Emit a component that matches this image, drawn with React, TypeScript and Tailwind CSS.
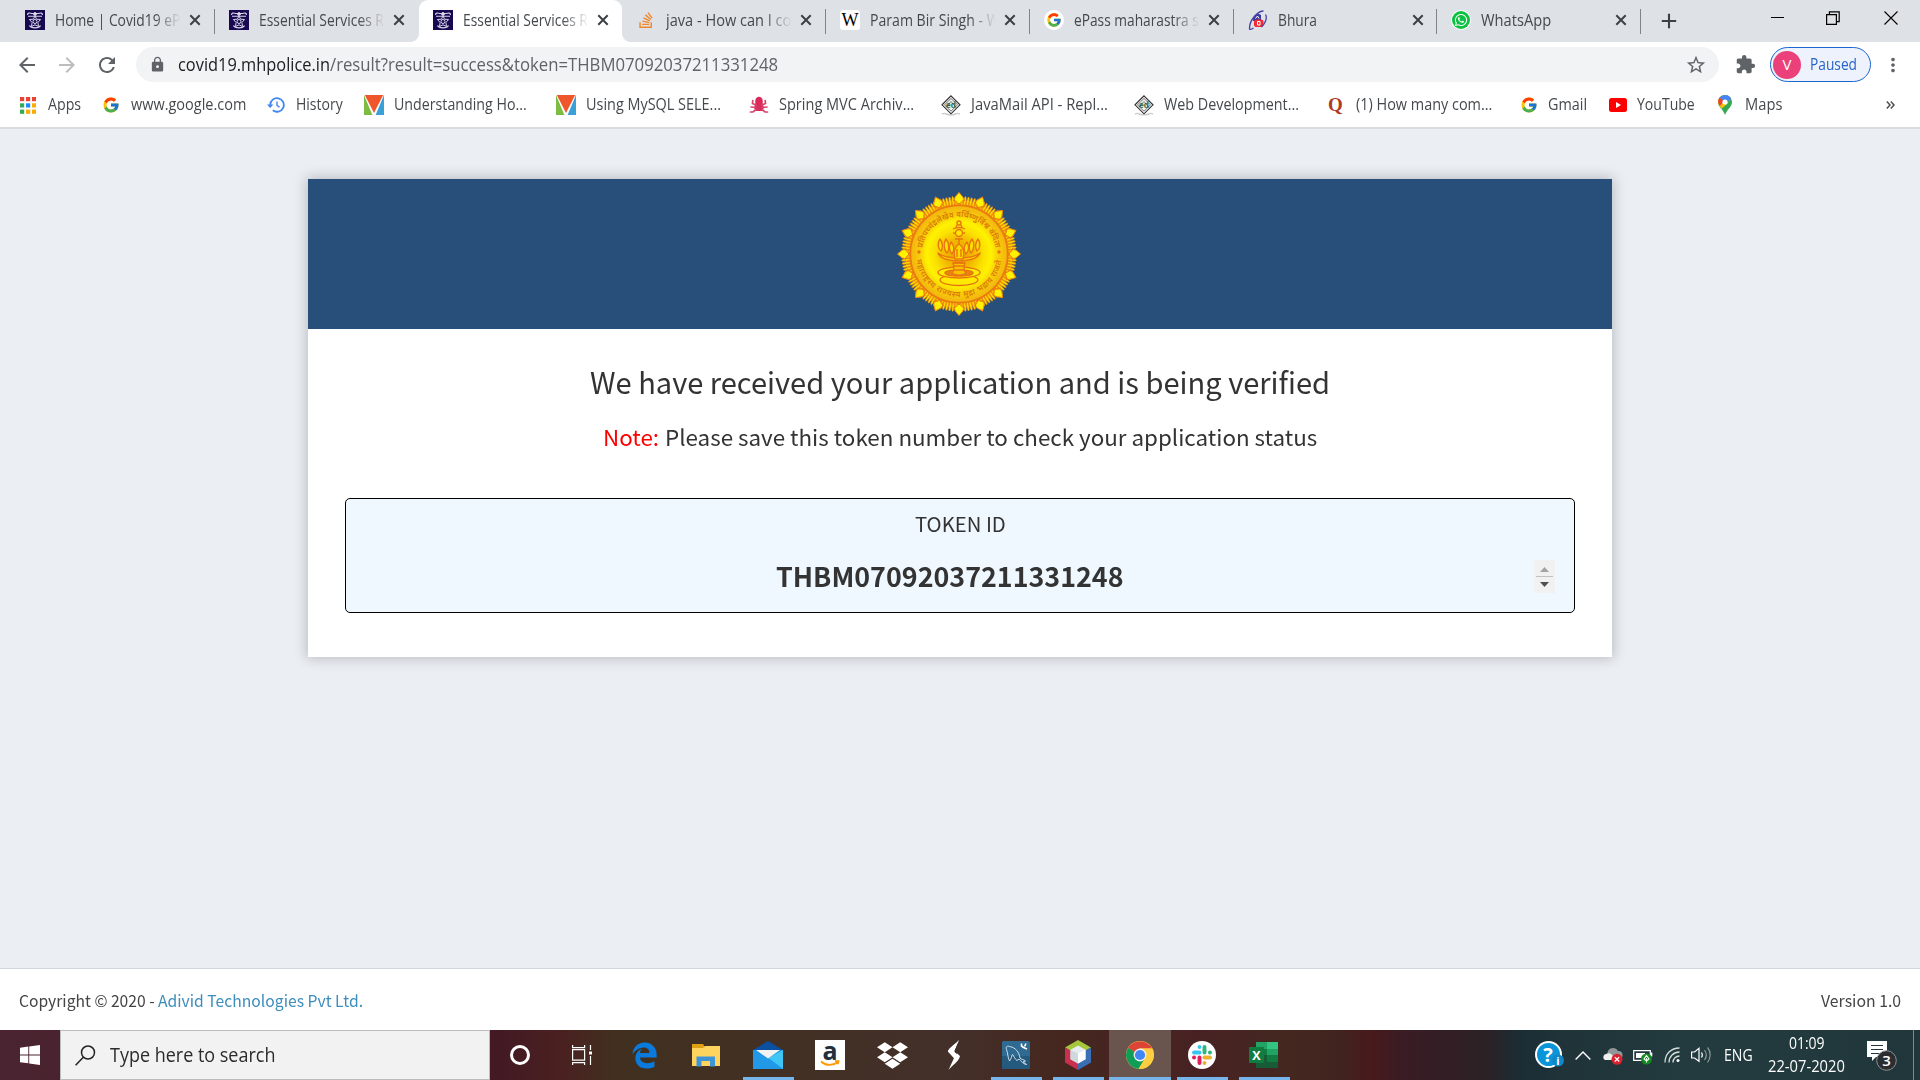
import React, { useLayoutEffect, useRef, useState } from 'react';
import { FcGoogle } from 'react-icons/fc';
import { FaDropbox, FaEdgeLegacy, FaStackOverflow, FaWhatsapp } from 'react-icons/fa6';
import { MdArrowBack, MdArrowForward, MdExtension, MdLock, MdMoreVert, MdRefresh, MdStarBorder } from 'react-icons/md';

/* Single-line text condensed or widened to an exact width. */
function Fit({ w, children, className = '' }: { w: number; children: React.ReactNode; className?: string }) {
  const ref = useRef<HTMLSpanElement>(null);
  const [s, setS] = useState(1);
  useLayoutEffect(() => {
    if (ref.current && ref.current.offsetWidth > 0) setS(w / ref.current.offsetWidth);
  }, [w]);
  return (
    <span className={`inline-block shrink-0 whitespace-nowrap ${className}`} style={{ width: w }}>
      <span ref={ref} className="inline-block origin-left" style={{ transform: `scaleX(${s})` }}>
        {children}
      </span>
    </span>
  );
}

const Police = () => (
  <svg viewBox="0 0 20 20" className="h-5 w-5 bg-[#17084f]" fill="none" stroke="#d9d5ea" strokeWidth="1">
    <path d="M2.500 5c0-2 2-2.500 4-1.500h7c2-1 4-.5 4 1.500M3 6.200h14" strokeWidth="1.100" />
    <circle cx="10" cy="4" r="1.400" fill="#d9d5ea" />
    <path d="M10 6l1.600 3.200 4 .3-2.700 3 .6 4L10 14.800l-3.500 1.700.6-4-2.700-3 4-.3z" />
    <circle cx="10" cy="11.500" r="2" />
    <path d="M4.500 15.500c1 2 3 2.300 5.500 2.300s4.500-.3 5.500-2.300" strokeWidth="1.200" />
  </svg>
);
const Wiki = () => (
  <span className="flex h-5 w-5 items-center justify-center rounded-[3px] bg-white font-['Liberation_Serif',serif] text-[18px] leading-none text-black">W</span>
);
const Bhura = () => (
  <svg viewBox="0 0 20 20" className="h-5 w-5" fill="none">
    <path d="M5 10c0-4 2-6 6-6l2 1v6H5z" fill="#3c3a9c" />
    <path d="M7.500 8.500l2-2.500 1.500 2.500" stroke="#fff" strokeWidth="1" />
    <rect x="6" y="9.500" width="9.500" height="7.500" rx="2.500" fill="#ee2b34" />
    <path d="M9.500 11.500v3.500h2.500v-3.500z" stroke="#fff" strokeWidth="1" />
    <path d="M15.500 1C11 1 1 9 1.500 19c.5 1 2.500 0 4-1M17.500 4.500c2 3 0 9-4 12.500" stroke="#4643a8" strokeWidth="1.300" />
  </svg>
);
const WhatsIcon = () => (
  <span className="flex h-5 w-5 items-center justify-center rounded-full bg-white">
    <span className="flex h-[18px] w-[18px] items-center justify-center rounded-full bg-[#0dc143]">
      <FaWhatsapp className="h-[14px] w-[14px] text-white" />
    </span>
  </span>
);

const tabs = [
  { t: 'Home | Covid19 eP', w: 125, icon: <Police /> },
  { t: 'Essential Services R', w: 125, icon: <Police /> },
  { t: 'Essential Services R', w: 125, icon: <Police />, active: true },
  { t: 'java - How can I co', w: 125, icon: <FaStackOverflow className="h-[18px] w-[18px] text-[#f0862c]" /> },
  { t: 'Param Bir Singh - W', w: 130, icon: <Wiki /> },
  { t: 'ePass maharastra s', w: 125, icon: <span className="rounded-full bg-white p-0.5"><FcGoogle className="h-4 w-4" /></span> },
  { t: 'Bhura', w: 39, icon: <Bhura /> },
  { t: 'WhatsApp', w: 70, icon: <WhatsIcon /> },
];

function TabStrip() {
  return (
    <div className="flex h-[42px] bg-[#dee1e6] pl-[11px] text-[15.5px] text-[#45494d]">
      {tabs.map((tab, i) => (
        <div
          key={i}
          className={`relative flex w-[203.75px] shrink-0 items-center pb-[2px] pl-[14px] ${tab.active ? 'rounded-t-[9px] bg-white' : ''}`}
        >
          <span className="flex h-5 w-5 shrink-0 items-center justify-center">{tab.icon}</span>
          <span className={`ml-[10px] w-[127px] overflow-hidden leading-[24px] ${tab.w > 100 ? '[mask-image:linear-gradient(90deg,#000_78%,transparent_99%)]' : ''}`}>
            <Fit w={tab.w}>{tab.t}</Fit>
          </span>
          <svg viewBox="0 0 12 12" className="ml-[7px] h-3 w-3 shrink-0" stroke="#3c4043" strokeWidth="2">
            <path d="M1.300 1.300l9.400 9.400M10.700 1.300L1.300 10.700" />
          </svg>
          {i !== 1 && i !== 2 && <span className="absolute right-0 top-[9px] h-[25px] w-px bg-[#808388]" />}
          {tab.active && (
            <>
              <span className="absolute -left-2 bottom-0 h-2 w-2 bg-[radial-gradient(circle_at_0_0,#dee1e6_7.5px,#fff_8px)]" />
              <span className="absolute -right-2 bottom-0 h-2 w-2 bg-[radial-gradient(circle_at_100%_0,#dee1e6_7.5px,#fff_8px)]" />
            </>
          )}
        </div>
      ))}
      <svg viewBox="0 0 16 16" className="ml-[20px] mt-[13px] h-4 w-4" stroke="#3c4043" strokeWidth="2.100">
        <path d="M8 .8v14.400M.8 8h14.400" />
      </svg>
      <div className="ml-auto mr-[22px] mt-[11px] flex">
        <svg viewBox="0 0 14 14" className="mr-[41px] h-[14px] w-[14px]"><path d="M0 6.500h13" stroke="#000" /></svg>
        <svg viewBox="0 0 14 14" className="mr-[44px] h-[14px] w-[14px]" fill="none" stroke="#000" strokeWidth="1.200">
          <path d="M.6 3.600h9.800v9.800H.6zM3.400 3.400V.9h9.800v9.800h-2.600" />
        </svg>
        <svg viewBox="0 0 14 14" className="h-[14px] w-[14px]" stroke="#000" strokeWidth="1.100"><path d="M.5.5l13 13M13.500.5l-13 13" /></svg>
      </div>
    </div>
  );
}

function Toolbar() {
  return (
    <div className="flex h-[45px] items-center bg-white pl-[15px] text-[#5f6368]">
      <MdArrowBack className="h-6 w-6" />
      <MdArrowForward className="ml-4 h-6 w-6 text-[#bbbdbf]" />
      <MdRefresh className="ml-4 h-6 w-6" />
      <div className="ml-[17px] flex h-[35px] w-[1583px] items-center rounded-full bg-[#f1f3f4] pl-[13px] text-[18px]">
        <MdLock className="h-[17px] w-[17px]" />
        <Fit w={152} className="ml-[12px] pb-[1px] leading-[25px] text-[#202124]">covid19.mhpolice.in</Fit>
        <Fit w={448} className="pb-[1px] leading-[25px]">/result?result=success&amp;token=THBM07092037211331248</Fit>
        <MdStarBorder className="ml-auto mr-[12px] h-[22px] w-[22px]" />
      </div>
      <MdExtension className="ml-[16px] h-[21px] w-[21px]" />
      <div className="ml-[14px] flex h-[35px] w-[101px] items-center rounded-full border-[1.5px] border-[#1b66d0] bg-[#edf2fc] pl-[2px]">
        <span className="flex h-[28px] w-[28px] items-center justify-center rounded-full bg-[#ec407a] text-[15px] text-white">V</span>
        <Fit w={47} className="ml-[9px] pb-[1px] text-[15.5px] leading-[23px] text-[#2962c8]">Paused</Fit>
      </div>
      <MdMoreVert className="ml-[11px] h-[22px] w-[22px]" />
    </div>
  );
}

const AppsIcon = () => (
  <svg viewBox="0 0 16 17" className="h-[17px] w-4">
    {['#ea4335', '#ea4335', '#ea4335', '#34a853', '#1a8cff', '#fbab05', '#34a853', '#fbab05', '#fbab05'].map((c, i) => (
      <rect key={i} x={(i % 3) * 6} y={Math.floor(i / 3) * 6.3} width="4.200" height="4.200" fill={c} />
    ))}
  </svg>
);
const HistoryIcon = () => (
  <svg viewBox="0 0 18 16" className="h-4 w-[18px]" fill="none" stroke="#4285f4" strokeWidth="1.800">
    <path d="M3.200 8a6.800 6.800 0 1 1 2.600 5.300" />
    <path d="M10 4.500V8.300l2.600 2" strokeWidth="1.400" />
    <path d="M0 7.600h6.400L3.200 11z" fill="#4285f4" stroke="none" />
  </svg>
);
const VIcon = () => (
  <svg viewBox="0 0 20 20" className="h-5 w-5">
    <path d="M0 0v20h8.400z" fill="#7dbb42" />
    <path d="M20 0v20h-8.400z" fill="#39a0d8" />
    <path d="M.8 0h18.400L10 18z" fill="#f0562c" />
  </svg>
);
const SpringIcon = () => (
  <svg viewBox="0 0 20 20" className="h-5 w-5" fill="none" stroke="#d8446c" strokeWidth="1.700" strokeLinecap="round">
    <ellipse cx="10" cy="6.500" rx="3.800" ry="4.800" fill="#dc2858" stroke="none" />
    <path d="M6.500 8h7l1.500 5-2 3H7l-2-3z" fill="#d92d5c" stroke="none" />
    <path d="M7 10L3.500 8.500 3.800 5.500M13 10l3.500-1.500-.3-3M7 12.500l-5-.5M13 12.500l5-.5M7 14.500l-3 2.500H1.500M13 14.500l3 2.500h2.500" />
  </svg>
);
const EdIcon = () => (
  <svg viewBox="0 0 20 20" className="h-5 w-5 overflow-visible" fill="none">
    <path d="M1 19c2-1 3-1 4 0 3 1 7 1 10 0 1-1 2-1 4 0" stroke="#ccc" strokeWidth="1.400" />
    <path d="M10 .8l9 9-9 9-9-9z" fill="#f2f2f2" stroke="#2d2d2d" strokeWidth="1.100" />
    <path d="M10 3.500l6.500 6.300L10 16.200 3.500 9.800z" stroke="#555" strokeWidth=".8" />
    <text x="10" y="12.600" textAnchor="middle" fontSize="8.500" fontWeight="700" fill="#2c7048" fontFamily="Liberation Sans">ed</text>
    <path d="M5 12.500l5-6 5 6" stroke="#333" strokeWidth=".6" />
  </svg>
);
const QIcon = () => <span className="pb-[1px] font-['Liberation_Serif',serif] text-[19px] font-bold leading-none text-[#b13a1c]">Q</span>;
const YT = () => (
  <svg viewBox="0 0 18 14" className="h-[14px] w-[18px]">
    <rect width="18" height="14" rx="2.500" fill="#f00" />
    <path d="M7 4v6l5-3z" fill="#fff" />
  </svg>
);
const MapPin = () => (
  <svg viewBox="0 0 14 20" className="h-5 w-[14px]">
    <path d="M7 0a7 7 0 0 1 7 7c0 5-5 7-7 13C5 14 0 12 0 7a7 7 0 0 1 7-7z" fill="#34a853" />
    <path d="M7 0a7 7 0 0 1 6.300 4L2.600 12.200A9 9 0 0 1 0 7a7 7 0 0 1 7-7z" fill="#fbbc04" />
    <path d="M7 0a7 7 0 0 1 6.300 4L8 8 1.500 2.600A7 7 0 0 1 7 0z" fill="#4285f4" />
    <path d="M1.600 2.500L7 7 2 11A7 7 0 0 1 1.600 2.500z" fill="#ea4335" />
    <path d="M2 11l5-6 3 3-6.500 6z" fill="#fbbc04" />
    <circle cx="7" cy="7" r="2.600" fill="#fff" />
  </svg>
);

/* slot: whole bookmark, iw: icon column, w: label width */
const marks = [
  { t: 'Apps', slot: 'w-[83px]', iw: 'w-[28px]', w: 33, icon: <AppsIcon /> },
  { t: 'www.google.com', slot: 'w-[164px]', iw: 'w-[28px]', w: 115, icon: <FcGoogle className="-ml-px h-[18px] w-[18px]" /> },
  { t: 'History', slot: 'w-[97px]', iw: 'w-[29px]', w: 47, icon: <HistoryIcon /> },
  { t: 'Understanding Ho...', slot: 'w-[192px]', iw: 'w-[30px]', w: 133, icon: <VIcon /> },
  { t: 'Using MySQL SELE...', slot: 'w-[193px]', iw: 'w-[30px]', w: 135, icon: <VIcon /> },
  { t: 'Spring MVC Archiv...', slot: 'w-[192px]', iw: 'w-[30px]', w: 135, icon: <SpringIcon /> },
  { t: 'JavaMail API - Repl...', slot: 'w-[193px]', iw: 'w-[30px]', w: 137, icon: <EdIcon /> },
  { t: 'Web Development...', slot: 'w-[194px]', iw: 'w-[30px]', w: 135, icon: <EdIcon /> },
  { t: '(1) How many com...', slot: 'w-[193px]', iw: 'w-[28px]', w: 136, icon: <QIcon /> },
  { t: 'Gmail', slot: 'w-[88px]', iw: 'w-[27px]', w: 39, icon: <FcGoogle className="-ml-px h-[18px] w-[18px]" /> },
  { t: 'YouTube', slot: 'w-[109px]', iw: 'w-[28px]', w: 58, icon: <YT /> },
  { t: 'Maps', slot: 'w-[80px]', iw: 'w-[27px]', w: 37, icon: <MapPin /> },
];

function Bookmarks() {
  return (
    <div className="flex h-[42px] items-center border-b-2 border-[#d9dbdf] bg-white pb-[4px] pl-[20px] text-[15.5px] text-[#45494d]">
      {marks.map((m, i) => (
        <div key={i} className={`flex shrink-0 items-center ${m.slot}`}>
          <span className={`flex shrink-0 items-center ${m.iw}`}>{m.icon}</span>
          <Fit w={m.w} className="pb-[2px] leading-[22px]">{m.t}</Fit>
        </div>
      ))}
      <svg viewBox="0 0 9 8" className="ml-auto mr-[25px] h-2 w-[9px]" fill="none" stroke="#4b4f53" strokeWidth="1.500">
        <path d="M.8.6L4 4 .8 7.400M4.800.6L8 4 4.800 7.400" />
      </svg>
    </div>
  );
}

const rays = Array.from({ length: 112 }, (_, i) => (i * 360) / 112);
const petals = Array.from({ length: 16 }, (_, i) => i * 22.5);

function Emblem() {
  return (
    <svg viewBox="-62 -62 124 124" className="h-[124px] w-[124px]">
      <defs>
        <radialGradient id="disc" cx="50%" cy="50%" r="50%">
          <stop offset="0" stopColor="#e8a000" />
          <stop offset=".3" stopColor="#f2b800" />
          <stop offset=".5" stopColor="#fbe000" />
          <stop offset=".66" stopColor="#fff200" />
          <stop offset=".8" stopColor="#f8cf08" />
          <stop offset="1" stopColor="#f2b410" />
        </radialGradient>
        <path id="arcTop" d="M-37 0A37 37 0 0 1 37 0" />
        <path id="arcBottom" d="M-43 0A43 43 0 0 0 43 0" />
      </defs>
      <circle r="54" fill="#ee8f10" />
      {rays.map((a) => (
        <ellipse key={a} cx="0" cy="-53" rx="1.100" ry="4.800" fill="#ffe000" stroke="#e8800f" strokeWidth=".6" transform={`rotate(${a})`} />
      ))}
      {petals.map((a) => (
        <g key={a} transform={`rotate(${a})`}>
          <path d="M0-61.500C2-59 4.500-57 4.500-54.500S2-50 0-50-4.500-52-4.500-54.500-2-59 0-61.500z" fill="#fff200" stroke="#ee8512" strokeWidth="1" />
          <path d="M-6-53.500C-4-54-2-52 0-50c2-2 4-4 6-3.500" fill="none" stroke="#e8750f" strokeWidth=".8" />
        </g>
      ))}
      <circle r="48.700" fill="url(#disc)" stroke="#ea7a10" strokeWidth="1.800" />
      <g fill="#dc7a08" fontFamily="'Noto Sans Devanagari', 'Noto Sans', sans-serif" fontSize="8" fontWeight="600">
        <text><textPath href="#arcTop" startOffset="6" textLength="104">प्रतिपच्चंद्रलेखेव वर्धिष्णुर्विश्व वंदिता</textPath></text>
        <text><textPath href="#arcBottom" startOffset="6" textLength="122">महाराष्ट्रस्य राज्यस्य मुद्रा भद्राय राजते</textPath></text>
      </g>
      <circle cx="-40" cy="-2" r="1.700" fill="#e8750f" />
      <circle cx="40" cy="-2" r="1.700" fill="#e8750f" />
      <g fill="none" stroke="#e8750f" strokeWidth="1.400" strokeLinejoin="round">
        <ellipse cx="0" cy="26" rx="19" ry="5.500" fill="#ffea00" />
        <ellipse cx="0" cy="18.500" rx="21" ry="5.500" fill="#ffee00" />
        <ellipse cx="0" cy="19" rx="14" ry="3" fill="#e8850f" />
        <path d="M-7 19C-4 16-5 12-6 9H6c-1 3-2 7 1 10-3 3-11 3-14 0z" fill="#fbc000" />
        <path d="M-6 9h12M-5 12H5M-6 16H6" />
        <path d="M-21-1C-19 5-8 7 0 7S19 5 21-1C16 3 8 4 0 4S-16 3-21-1z" fill="#ffd800" />
        <path d="M-19-15c-3 4-2 10 1 12 2-3 2-8-1-12zM19-15c3 4 2 10-1 12-2-3-2-8 1-12zM-13-15c-3 4-2 11 1 14 3-4 2-10-1-14zM13-15c3 4 2 11-1 14-3-4-2-10 1-14zM-8-12c-2 4-2 9 1 12 3-4 2-9-1-12zM8-12c2 4 2 9-1 12-3-4-2-9 1-12z" fill="#ffdf00" />
        <path d="M-4 5C-6-3-3-8 0-10 3-8 6-3 4 5z" fill="#ffd800" />
        <path d="M-2 3v-8M2 3v-8M0-10v-5" />
        <circle cx="0" cy="-21" r="3.500" fill="#ffe800" />
        <path d="M-6-25c3-2 9-2 12 0M-4-15h8M-3-27l3-5 3 5M-6-21h3M3-21h3" />
        <circle cx="0" cy="-31" r="2" fill="#ffe800" />
      </g>
    </svg>
  );
}

function Page() {
  return (
    <main className="flex h-[839px] flex-col items-center bg-[#ebeef3] pt-[50px] font-['Noto_Sans_CJK_SC',sans-serif] text-[#333]">
      <section className="flex h-[478px] w-[1304px] flex-col items-center bg-white shadow-[0_0_12px_2px_rgba(0,0,0,0.2)]">
        <div className="flex h-[150px] w-full justify-center bg-[#284f79] pt-[13px] pr-[2px]">
          <Emblem />
        </div>
        <Fit w={740} className="mt-[32px] h-[40px] text-[29.5px] leading-[40px]">We have received your application and is being verified</Fit>
        <div className="mt-[20px] flex h-[30px] gap-[6px] text-[22px] leading-[30px]">
          <Fit w={56} className="text-[#f00]">Note:</Fit>
          <Fit w={652}>Please save this token number to check your application status</Fit>
        </div>
        <div className="mt-[47px] flex h-[115px] w-[1230px] flex-col items-center rounded-[5px] border border-black bg-[#eff7ff] pt-[9px]">
          <Fit w={91} className="text-[20.5px] leading-[30px]">TOKEN ID</Fit>
          <div className="mt-[21px] flex h-[34px] w-full items-center pl-[430px] pr-[19px]">
            <Fit w={348} className="text-[27px] font-bold leading-[36px]">THBM07092037211331248</Fit>
            <div className="ml-auto flex h-[33px] w-[21px] flex-col items-center bg-[#f1f1f1] pt-[7px]">
              <svg viewBox="0 0 9 5" className="h-[5px] w-[9px]"><path d="M0 5l4.500-5L9 5z" fill="#a3a3a3" /></svg>
              <span className="mt-[4px] h-px w-[17px] bg-[#c1c1c1]" />
              <svg viewBox="0 0 9 5" className="mt-[5px] h-[5px] w-[9px]"><path d="M0 0l4.500 5L9 0z" fill="#505050" /></svg>
            </div>
          </div>
        </div>
      </section>
    </main>
  );
}

const Excel = () => (
  <svg viewBox="0 0 30 28" className="h-7 w-[30px]">
    <path d="M7 1h22v26H7z" fill="#185c37" />
    <path d="M7 1h11v7H7z" fill="#21a366" /><path d="M18 1h11v7H18z" fill="#33c481" />
    <path d="M7 8h11v6H7z" fill="#107c41" /><path d="M18 8h11v6H18z" fill="#21a366" />
    <path d="M18 14h11v7H18z" fill="#107c41" />
    <rect x="0" y="6" width="15" height="16" rx="1" fill="#107c41" />
    <text x="7.500" y="18.500" textAnchor="middle" fontSize="12.500" fontWeight="700" fill="#fff" fontFamily="Open Sans">X</text>
  </svg>
);
const Chrome = () => (
  <svg viewBox="0 0 28 28" className="h-7 w-7">
    <circle cx="14" cy="14" r="14" fill="#ffcd40" />
    <path d="M14 14L1.900 7A14 14 0 0 1 26.100 7.500H14z" fill="#db4437" />
    <path d="M1.900 7A14 14 0 0 0 12.500 27.900L18.500 18z" fill="#0f9d58" />
    <path d="M1.900 7l6.500 10.200L14 14z" fill="#0f9d58" />
    <path d="M26.100 7.500H14v7l5.600 2.500L12.500 27.900A14 14 0 0 0 26.100 7.500z" fill="#ffcd40" />
    <circle cx="14" cy="14" r="6.400" fill="#f1f1f1" /><circle cx="14" cy="14" r="5.100" fill="#4285f4" />
  </svg>
);
const Slack = () => (
  <svg viewBox="0 0 28 28" className="h-7 w-7" strokeWidth="3.900" strokeLinecap="round">
    <circle cx="14" cy="14" r="14" fill="#fff" />
    <path d="M6 11.500h5.500" stroke="#36c5f0" /><path d="M11.500 6v.1" stroke="#36c5f0" />
    <path d="M16.500 6v5.500" stroke="#2eb67d" /><path d="M22 11.500h-.1" stroke="#2eb67d" />
    <path d="M16.500 16.500H22" stroke="#ecb22e" /><path d="M16.500 22v-.1" stroke="#ecb22e" />
    <path d="M11.500 16.500V22" stroke="#e01e5a" /><path d="M6 16.500h.1" stroke="#e01e5a" />
  </svg>
);
const Hex = () => (
  <svg viewBox="0 0 26 30" className="h-[30px] w-[26px]">
    <path d="M13 0l13 7.500L13 15 0 7.500z" fill="#a5c73c" />
    <path d="M0 7.500L13 15v15L0 22.500z" fill="#c9304f" />
    <path d="M26 7.500L13 15v15l13-7.500z" fill="#3a6fb5" />
    <path d="M13 5.500l7.500 4.200v9.600L13 23.500l-7.500-4.200V9.700z" fill="#e6ecef" />
    <path d="M13 13.500l7.500-3.800v9.600L13 23.500z" fill="#fff" /><path d="M13 13.500L5.500 9.700v9.600l7.500 4.200z" fill="#cfd8dd" />
  </svg>
);
const MySql = () => (
  <svg viewBox="0 0 28 28" className="h-7 w-7" fill="none">
    <rect width="28" height="28" rx="1.500" fill="#2f6a93" /><path d="M0 15h28v11.500L26.500 28h-25L0 26.500z" fill="#245a7e" />
    <path d="M7.500 20C5.500 16 6 12 4.500 8.500 3.500 6 5 4.500 7.500 5.500c6 1 9.500 5.500 10.500 11.500 1 1.500 4 1.500 5.500 3l-2.500.8 3.500 2.700c-5-1-5-4-7.500-5.500l-2 1.500c-2-1-3-4.500-4.500-6-1 1-1 4.500-3 6.500z" stroke="#dfe9f0" strokeWidth=".9" />
    <path d="M19.500 2.500v2.500l2 1.500 3.500 1.500M22.500 5.500l1.500-3" stroke="#fff" strokeWidth="1.600" />
  </svg>
);
const Folder = () => (
  <svg viewBox="0 0 28 24" className="h-[24px] w-7">
    <path d="M0 1h11l2 3v3H0z" fill="#dfa011" /><path d="M0 5h11l2-2h15v20H0z" fill="#ffd45e" />
    <path d="M4.500 23.500V13.500h18.500v10h-5V18h-8.500v5.500z" fill="#3f94d8" />
  </svg>
);
const Mail = () => (
  <svg viewBox="0 0 30 28" className="h-7 w-[30px]">
    <path d="M0 9L15 0l15 9v3H0z" fill="#0a4fa0" /><path d="M0 9h30v19H0z" fill="#1a98e4" />
    <path d="M30 9v19L15 17z" fill="#3fc6f5" /><path d="M0 9v19h30L15 17z" fill="#2199e6" />
    <path d="M3 9h24l-12 8.500z" fill="#f2f2f2" />
  </svg>
);
const Amazon = () => (
  <span className="flex h-[30px] w-[30px] flex-col items-center bg-white">
    <span className="font-['Open_Sans',sans-serif] text-[25px] font-bold leading-[20px] text-[#222f3e]">a</span>
    <svg viewBox="0 0 20 7" className="h-[7px] w-5" fill="none" stroke="#f90" strokeWidth="1.800"><path d="M1 1.500c5 4.500 12 4.500 17 .5M15 1.200h3.500l-.8 3" /></svg>
  </span>
);
const Bolt = () => (
  <svg viewBox="0 0 14 30" className="h-[30px] w-[14px]" fill="#fff">
    <path d="M12 0C9 4 2 7.500 1 11.500l6 6.500-5.500 12c4-5 10.500-8.500 11.500-14L7.500 11z" />
    <path d="M12 0L7 12l3 2 1-4z" fill="#43302a" />
    <path d="M12 0C9 4 2 7.500 1 11.500l6 6.500L9 14 7 11z" />
  </svg>
);
const TaskView = () => (
  <svg viewBox="0 0 20 20" className="h-5 w-5" fill="none" stroke="#fff" strokeWidth="1.200">
    <path d="M.6 4.600h12v10.600H.6zM.6 0v2.600h12V0M.6 20v-2.400h12V20M18.500 0v5M18.500 11v9" /><path d="M17 6.500h3v3h-3z" fill="#fff" stroke="none" />
  </svg>
);

const apps = [
  { icon: <span className="h-5 w-5 rounded-full border-[3px] border-white" /> },
  { icon: <TaskView /> },
  { icon: <FaEdgeLegacy className="h-[27px] w-[27px] text-[#0a7bdc]" /> },
  { icon: <Folder /> },
  { icon: <Mail />, run: true },
  { icon: <Amazon /> },
  { icon: <FaDropbox className="h-[31px] w-[31px] text-white" /> },
  { icon: <Bolt /> },
  { icon: <MySql />, run: true },
  { icon: <Hex />, run: true },
  { icon: <Chrome />, run: true, on: true },
  { icon: <Slack />, run: true },
  { icon: <Excel />, run: true },
];

function Tray() {
  return (
    <div className="ml-auto flex h-full items-center text-[16px] text-white">
      <svg viewBox="0 0 30 28" className="h-7 w-[30px] overflow-visible">
        <circle cx="13.500" cy="13.500" r="13.500" fill="#fff" /><circle cx="13.500" cy="13.500" r="11.500" fill="#0a95d8" />
        <text x="13" y="20.500" textAnchor="middle" fontSize="20" fontWeight="700" fill="#fff" fontFamily="Open Sans">?</text>
        <circle cx="23" cy="19.500" r="6" fill="#1187c9" />
        <text x="23" y="23.500" textAnchor="middle" fontSize="11" fontWeight="700" fill="#fff" fontFamily="Open Sans">i</text>
      </svg>
      <svg viewBox="0 0 16 9" className="ml-[10px] h-[9px] w-4" fill="none" stroke="#fff" strokeWidth="1.400"><path d="M.6 8.400L8 1l7.400 7.400" /></svg>
      <svg viewBox="0 0 21 18" className="ml-[11px] mt-[2px] h-[18px] w-[21px]">
        <path d="M6 9a5.500 5.500 0 0 1 10-5 4 4 0 0 1 1 8H8z" fill="#909798" />
        <path d="M3 13a3.200 3.200 0 0 1 1-6c3-2 6 0 7 2l3 4z" fill="#f0f0f0" />
        <circle cx="15" cy="12.300" r="5.500" fill="#d9232e" /><path d="M12.800 10.100l4.400 4.400M17.200 10.100l-4.400 4.400" stroke="#fff" strokeWidth="1.300" />
      </svg>
      <svg viewBox="0 0 20 17" className="ml-[10px] mt-[3px] h-[17px] w-5">
        <path d="M.7 2.700h16.600v9.600H.7z" fill="none" stroke="#fff" strokeWidth="1.200" /><path d="M3 5h9v5H3zM18 4.500h1.300v4H18z" fill="#fff" />
        <circle cx="13.500" cy="11" r="5.500" fill="#128a1d" /><path d="M13.500 7.500l2.500 3.300-2.500 2.200-2.500-2.200zM13.500 10v4.500" fill="none" stroke="#fff" strokeWidth="1.100" />
      </svg>
      <svg viewBox="0 0 17 16" className="ml-[11px] h-4 w-[17px]" fill="none" stroke="#d7dddd" strokeWidth="1.300">
        <path d="M1 15.500C1 7 7 1 15.500 1M5 15.500C5 9.500 9.500 5 15.500 5M9 15.500c0-4 3-6.500 6.500-6.500" /><circle cx="14" cy="13.500" r="1.500" fill="#fff" stroke="none" />
      </svg>
      <svg viewBox="0 0 20 18" className="ml-[10px] h-[18px] w-5" fill="none" stroke="#fff" strokeWidth="1.200">
        <path d="M.6 6h3L8 2.200v13L3.600 12h-3z" /><path d="M10.500 6.500c1 1.500 1 3.500 0 5" /><path d="M13.500 4c2.200 3 2.200 7 0 10M16.500 1.500c3.500 4 3.500 10.500 0 15" stroke="#8d9a9c" />
      </svg>
      <Fit w={29} className="ml-[13px] leading-[24px]">ENG</Fit>
      <div className="ml-[15px] flex w-[77px] flex-col items-center text-[15.5px] leading-[23px]">
        <Fit w={36}>01:09</Fit>
        <Fit w={77}>22-07-2020</Fit>
      </div>
      <svg viewBox="0 0 32 32" className="ml-[22px] mt-[2px] h-8 w-8">
        <path d="M0 1h20v16H9l-4 4v-4H0z" fill="#fff" /><path d="M4 5.500h12M4 9.500h12M4 13.500h8" stroke="#26373a" strokeWidth="1.200" />
        <circle cx="19.500" cy="20.500" r="9.800" fill="#2b2d31" stroke="#8e9394" strokeWidth="1" />
        <text x="19.500" y="26" textAnchor="middle" fontSize="15" fill="#fff" fontFamily="Open Sans" fontWeight="600">3</text>
      </svg>
      <span className="ml-[14px] mr-[6px] h-full w-px bg-[#7d8a8c]" />
    </div>
  );
}

function Taskbar() {
  return (
    <div className="flex h-[50px] bg-[linear-gradient(90deg,#4a2430_0px,#431a24_500px,#4a2020_560px,#41301f_615px,#43302a_950px,#45271f_1060px,#482223_1200px,#442820_1290px,#40231e_1340px,#481a1b_1370px,#3a1c24_1400px,#301f25_1460px,#2a2226_1490px,#1b2c35_1520px,#1f3338_1560px,#233b3f_1700px,#20363a_1920px)]">
      <div className="flex w-[60px] items-center justify-center">
        <svg viewBox="0 0 20 20" className="h-5 w-5" fill="#fff"><path d="M0 2.700l8.300-1.100v7.900H0zM9.200 1.500L20 0v9.500H9.200zM0 10.400h8.300v7.900L0 17.200zM9.200 10.400H20V20L9.200 18.500z" /></svg>
      </div>
      <div className="flex w-[430px] items-center border border-[#bcbcbc] bg-[#f2f2f2] pl-[14px] text-[19.5px] text-[#2b2b2b]">
        <svg viewBox="0 0 21 21" className="h-[21px] w-[21px]" fill="none" stroke="#222" strokeWidth="1.500"><circle cx="13" cy="7.500" r="6.500" /><path d="M8.300 12.200L.6 20.300" /></svg>
        <Fit w={165} className="ml-[14px] leading-[30px]">Type here to search</Fit>
      </div>
      <div className="-ml-px flex">
        {apps.map((a, i) => (
          <div key={i} className={`flex w-[62px] shrink-0 flex-col items-center ${a.on ? 'bg-[#69544e]' : ''}`}>
            <span className="flex h-[47px] items-center justify-center pt-[3px]">{a.icon}</span>
            {a.run && <span className={`h-[3px] bg-[#76b4ec] ${a.on ? 'w-full' : 'w-[51px]'}`} />}
          </div>
        ))}
      </div>
      <Tray />
    </div>
  );
}

export default function App() {
  return (
    <div className="flex h-[1080px] w-[1920px] flex-col overflow-hidden font-['Open_Sans',sans-serif]">
      <TabStrip />
      <Toolbar />
      <Bookmarks />
      <Page />
      <footer className="flex h-[62px] items-center justify-between border-t border-[#d2d6de] bg-white pl-[19px] pr-[19px] font-['Noto_Sans_CJK_SC',sans-serif] text-[16px] leading-[24px] text-[#444]">
        <div className="flex">
          <Fit w={136}>Copyright © 2020 -</Fit>
          <Fit w={205} className="ml-[3px] text-[#3c8dbc]">Adivid Technologies Pvt Ltd.</Fit>
        </div>
        <Fit w={80}>Version 1.0</Fit>
      </footer>
      <Taskbar />
    </div>
  );
}
